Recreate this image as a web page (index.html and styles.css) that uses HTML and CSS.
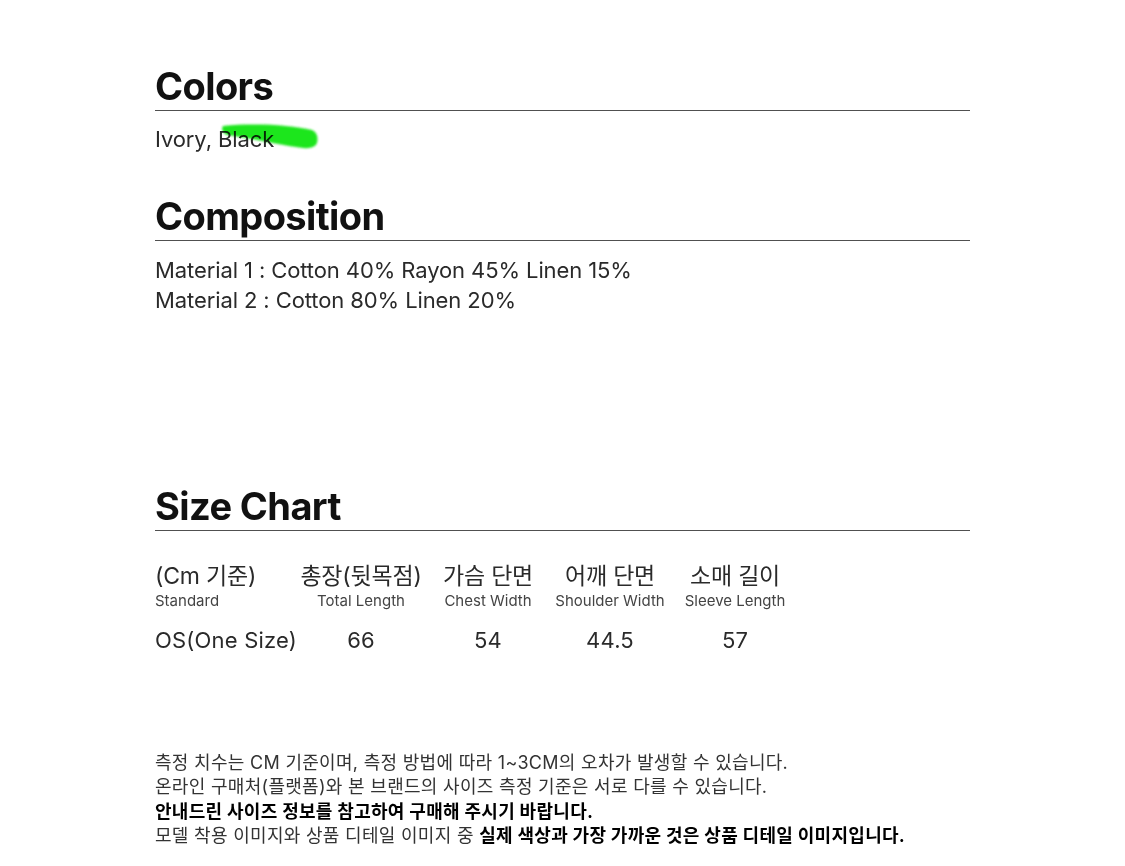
FILE: index.html
```html
<!DOCTYPE html>
<html lang="ko">
<head>
<meta charset="utf-8">
<link rel="stylesheet" href="styles.css">
</head>
<body>
<main class="page">
  <section class="block colors">
    <h2 class="title">Colors</h2>
    <p class="text marked">Ivory, Black
      <svg class="marker" width="110" height="40" viewBox="0 0 110 40" aria-hidden="true">
        <defs><filter id="soft" x="-10%" y="-30%" width="120%" height="160%"><feGaussianBlur stdDeviation="1.1"/></filter></defs>
        <path d="M8 7 C 40 4, 75 6, 97 11 Q 104 14, 102 24 Q 100 30, 88 29 C 60 25, 35 19, 12 16 Q 5 12, 8 7 Z" fill="#1fe61f" filter="url(#soft)"/>
      </svg>
    </p>
  </section>

  <section class="block composition">
    <h2 class="title">Composition</h2>
    <p class="text">Material 1 : Cotton 40% Rayon 45% Linen 15%</p>
    <p class="text">Material 2 : Cotton 80% Linen 20%</p>
  </section>

  <section class="block sizes">
    <h2 class="title">Size Chart</h2>
    <div class="chart">
      <div class="col first">
        <div class="ko">(Cm 기준)</div>
        <div class="en">Standard</div>
        <div class="val">OS(One Size)</div>
      </div>
      <div class="col">
        <div class="ko">총장(뒷목점)</div>
        <div class="en">Total Length</div>
        <div class="val">66</div>
      </div>
      <div class="col">
        <div class="ko">가슴 단면</div>
        <div class="en">Chest Width</div>
        <div class="val">54</div>
      </div>
      <div class="col">
        <div class="ko">어깨 단면</div>
        <div class="en">Shoulder Width</div>
        <div class="val">44.5</div>
      </div>
      <div class="col">
        <div class="ko">소매 길이</div>
        <div class="en">Sleeve Length</div>
        <div class="val">57</div>
      </div>
    </div>
  </section>

  <section class="notes">
    <p>측정 치수는 CM 기준이며, 측정 방법에 따라 1~3CM의 오차가 발생할 수 있습니다.</p>
    <p>온라인 구매처(플랫폼)와 본 브랜드의 사이즈 측정 기준은 서로 다를 수 있습니다.</p>
    <p><strong>안내드린 사이즈 정보를 참고하여 구매해 주시기 바랍니다.</strong></p>
    <p>모델 착용 이미지와 상품 디테일 이미지 중 <strong>실제 색상과 가장 가까운 것은 상품 디테일 이미지입니다.</strong></p>
  </section>
</main>
</body>
</html>
```

FILE: styles.css
```css
* { box-sizing: border-box; }
html, body { margin: 0; padding: 0; background: #fff; }
body {
  font-family: Inter, "Noto Sans CJK KR", "Noto Sans", sans-serif;
  color: #222;
}
.page {
  width: 815px;
  margin-left: 155px;
  padding-top: 64px;
}
.title {
  margin: 0;
  font-size: 38px;
  font-weight: 700;
  letter-spacing: -0.6px;
  line-height: 44px;
  color: #111;
  padding-bottom: 2px;
  border-bottom: 1.5px solid #505050;
}
.text {
  margin: 0;
  font-size: 22px;
  line-height: 30px;
  letter-spacing: -0.1px;
  color: #2a2a2a;
}
.colors .text { margin-top: 13px; }
.marked { position: relative; }
.marker {
  position: absolute;
  left: 60px;
  top: -5px;
  mix-blend-mode: multiply;
}
.composition { margin-top: 40px; }
.composition .title { margin-bottom: 14px; }
.sizes { margin-top: 169px; }
.chart {
  display: flex;
  margin-top: 30px;
  color: #2a2a2a;
}
.col {
  display: flex;
  flex-direction: column;
  align-items: center;
  text-align: center;
  white-space: nowrap;
}
.col.first { align-items: flex-start; text-align: left; width: 140px; }
.col:nth-child(2) { width: 132px; }
.col:nth-child(3) { width: 122px; }
.col:nth-child(4) { width: 122px; }
.col:nth-child(5) { width: 128px; }
.ko {
  font-size: 23px;
  line-height: 30px;
  letter-spacing: -0.2px;
}
.en {
  font-size: 15px;
  line-height: 20px;
  letter-spacing: 0;
  color: #444;
}
.val {
  margin-top: 14px;
  font-size: 22px;
  line-height: 30px;
  letter-spacing: 0.2px;
}
.notes {
  margin-top: 96px;
  font-size: 18px;
  line-height: 24.4px;
  letter-spacing: 0.3px;
  color: #333;
}
.notes p { margin: 0; white-space: nowrap; }
.notes strong { color: #000; font-weight: 700; }
```
